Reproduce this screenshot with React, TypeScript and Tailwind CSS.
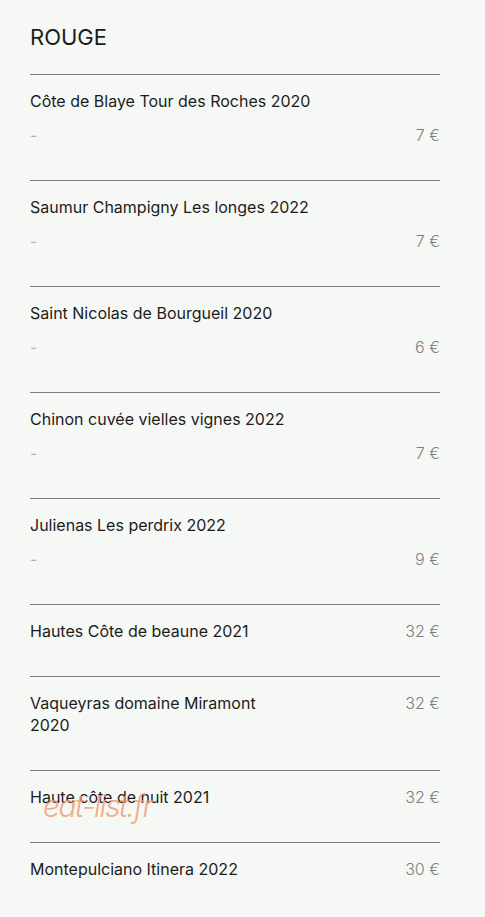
const wines = [
  { name: "Côte de Blaye Tour des Roches 2020", desc: "-", price: "7 €" },
  { name: "Saumur Champigny Les longes 2022", desc: "-", price: "7 €" },
  { name: "Saint Nicolas de Bourgueil 2020", desc: "-", price: "6 €" },
  { name: "Chinon cuvée vielles vignes 2022", desc: "-", price: "7 €" },
  { name: "Julienas Les perdrix 2022", desc: "-", price: "9 €" },
  { name: "Hautes Côte de beaune 2021", desc: null, price: "32 €" },
  { name: "Vaqueyras domaine Miramont 2020", desc: null, price: "32 €" },
  { name: "Haute côte de nuit 2021", desc: null, price: "32 €" },
  { name: "Montepulciano Itinera 2022", desc: null, price: "30 €" },
];

export default function App() {
  return (
    <div
      className="relative min-h-[917px] bg-[#f6f8f5] px-[30px] pt-[22px] text-[#1c1c1c]"
      style={{ fontFamily: "Inter, 'Liberation Sans', sans-serif" }}
    >
      <h2 className="mb-[22px] text-[22px] leading-[30px] font-normal">ROUGE</h2>
      <div className="w-[410px]">
        {wines.map((w) => (
          <div key={w.name} className="border-t border-[#7c7c7c] pt-[15px] pb-[34px]">
            {w.desc ? (
              <>
                <div className="text-[16px] leading-[22px]">{w.name}</div>
                <div className="mt-[12px] flex justify-between text-[16px] leading-[22px] text-[#7e7e7e]">
                  <span className="text-[#b5b5b5]">{w.desc}</span>
                  <span className="font-light">{w.price}</span>
                </div>
              </>
            ) : (
              <div className="flex justify-between text-[16px] leading-[22px]">
                <span className="w-[260px]">{w.name}</span>
                <span className="font-light text-[#7e7e7e]">{w.price}</span>
              </div>
            )}
          </div>
        ))}
      </div>
      {/* watermark over the list */}
      <span className="pointer-events-none absolute left-[43px] top-[788px] text-[30px] leading-[36px] font-light italic tracking-[-1.5px] text-[#f19a6f] opacity-80">
        eat-list.fr
      </span>
    </div>
  );
}
